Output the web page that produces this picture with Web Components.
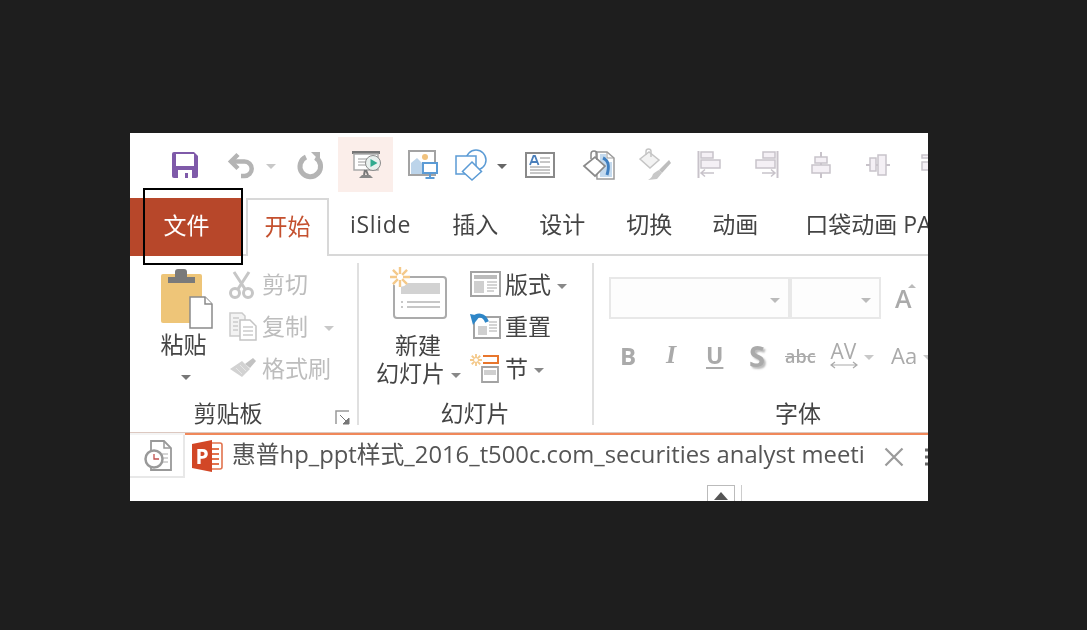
<!DOCTYPE html>
<html lang="zh"><head><meta charset="utf-8"><title>PowerPoint ribbon</title>
<style>
html,body{margin:0;height:100%;background:#1e1e1e}
body{display:flex;align-items:flex-start;padding:133px 0 0 130px;box-sizing:border-box;overflow:hidden;
font-family:"Open Sans","Noto Sans CJK SC",sans-serif;color:#444}
</style></head><body>
<app-window>
  <qat-bar></qat-bar>
  <tab-strip></tab-strip>
  <ribbon-body>
    <clip-group></clip-group>
    <slide-group></slide-group>
    <font-group></font-group>
  </ribbon-body>
  <doc-tab></doc-tab>
</app-window>
<script>
const G='#b4b4b4',L='#c8c3ca',LF='#f4f0f5',B='#5b9bd5',O='#f4c98a';
const sun=(cx,cy,r,c,w)=>{let s='';for(let i=0;i<8;i++){const a=i*Math.PI/4;s+=`M${cx+Math.cos(a)*r*.3} ${cy+Math.sin(a)*r*.3}L${cx+Math.cos(a)*r} ${cy+Math.sin(a)*r}`}return `<path d="${s}" stroke="${c}" stroke-width="${w}" fill="none"/>`};
const ICONS={
save:[26,26,`<path d="M2 0h20l4 4v20a2 2 0 0 1-2 2H2a2 2 0 0 1-2-2V2a2 2 0 0 1 2-2z" fill="#7f5aa9"/><rect x="4" y="2" width="18" height="12" fill="#fff"/><path d="M6 26v-8h14v8h-4v-5h-3v5z" fill="#fff"/>`],
undo:[28,26,`<path d="M10 2.500L3 9.500l7 7" fill="none" stroke="${G}" stroke-width="4.500"/><path d="M4 9.500h12.500a7.200 7.200 0 0 1 0 14.400H13" fill="none" stroke="${G}" stroke-width="4.500"/>`],
redo:[26,27,`<path d="M17.500 6.500A10.300 10.300 0 1 1 8 6" fill="none" stroke="${G}" stroke-width="5"/><path d="M13 1h9v9z" fill="${G}"/>`],
present:[32,30,`<path d="M2 2.500h28" stroke="#777" stroke-width="3"/><path d="M4 4h24v16H4z" fill="#fff" stroke="#aaa" stroke-width="1.500"/><path d="M8 9h10M8 12h8M8 15h8" stroke="#9a9a9a"/><circle cx="23" cy="13" r="7.500" fill="#e8f0ee" stroke="#8b8b8b"/><path d="M20.500 9l7 4-7 4z" fill="#2faa8f"/><path d="M15 20l-1 5M16 20l2 5" stroke="#777" stroke-width="2"/><path d="M12 25h8l3 3H9z" fill="#888"/>`],
picmon:[30,29,`<rect x="1" y="1" width="26" height="24" fill="#fff" stroke="#a3a3a3" stroke-width="2"/><circle cx="17" cy="7" r="3" fill="#f1c27d"/><path d="M3 24V13l6-5 6 6 1 10z" fill="#bcd4ea"/><rect x="15" y="13" width="14" height="10" fill="#fff" stroke="${B}" stroke-width="2"/><path d="M22 23v4M17.500 28h9" stroke="${B}" stroke-width="2"/>`],
shapes:[33,32,`<circle cx="21" cy="11" r="10" fill="#fff" stroke="${B}" stroke-width="1.500"/><rect x="1" y="7" width="20" height="18" fill="#fff" stroke="${B}" stroke-width="1.500"/><path d="M17 13l9.500 9.500L17 31l-9.500-8.500z" fill="#fff" stroke="${B}" stroke-width="1.500"/>`],
textbox:[30,26,`<rect x="1" y="1" width="28" height="24" fill="#fff" stroke="#8a8a8a" stroke-width="2"/><path d="M15 6h10M15 10h10M5 15h20M5 18h20M5 21h20" stroke="#8e8e8e"/><path d="M5 13l3.500-9h1.500l3.500 9M6.500 10h6" fill="none" stroke="#4a7fbb" stroke-width="1.800"/>`],
paint:[32,30,`<path d="M13 2h11l7 6v21H14z" fill="#fff" stroke="#9b9b9b" stroke-width="1.500"/><path d="M24 2v6h7" fill="none" stroke="#9b9b9b"/><path d="M17 4h6v8h6v15H17z" fill="#c4daee"/><path d="M20 8c7 3 6 10 4 17" stroke="#3f7fc0" stroke-width="3" fill="none"/><path d="M1 16L12 7l10 9-10 10z" fill="#fff" stroke="#8a8a8a" stroke-width="1.700"/><path d="M8 9V4a3 3 0 0 1 6 0v6" fill="none" stroke="#8a8a8a" stroke-width="1.500"/>`],
brushb:[32,32,`<path d="M1 10L10 3l10 8-9 8z" fill="#f3f3f3" stroke="#c5c5c5" stroke-width="1.500"/><path d="M7 6V2.500a2.500 2.500 0 0 1 5 0V8" fill="none" stroke="#c5c5c5" stroke-width="1.500"/><path d="M30 11L20 21l3 3L32 14z" fill="#bdbdbd"/><path d="M20 21l3 3-5 6-9 1c3-2 4-3 5-6 2-2 4-3 6-4z" fill="#c8c8c8"/>`],
alignl:[24,27,`<path d="M1.500 0v27" stroke="${L}" stroke-width="2"/><rect x="4" y="1" width="12" height="6" fill="${LF}" stroke="${L}" stroke-width="1.500"/><rect x="4" y="9" width="19" height="8" fill="${LF}" stroke="${L}" stroke-width="1.500"/><path d="M17 22H4m4-3.500L4 22l4 3.500" fill="none" stroke="${L}" stroke-width="1.500"/>`],
alignr:[24,27,`<path d="M22.500 0v27" stroke="${L}" stroke-width="2"/><rect x="8" y="1" width="12" height="6" fill="${LF}" stroke="${L}" stroke-width="1.500"/><rect x="1" y="9" width="19" height="8" fill="${LF}" stroke="${L}" stroke-width="1.500"/><path d="M7 22h13m-4-3.500l4 3.500-4 3.500" fill="none" stroke="${L}" stroke-width="1.500"/>`],
alignc:[20,26,`<path d="M10 0v26" stroke="${L}" stroke-width="2"/><rect x="4" y="5" width="12" height="6" fill="${LF}" stroke="${L}" stroke-width="1.500"/><rect x="1" y="13" width="18" height="8" fill="${LF}" stroke="${L}" stroke-width="1.500"/>`],
alignm:[24,22,`<path d="M0 11h24" stroke="${L}" stroke-width="2"/><rect x="4" y="4" width="6" height="13" fill="${LF}" stroke="${L}" stroke-width="1.500"/><rect x="12" y="1" width="8" height="20" fill="${LF}" stroke="${L}" stroke-width="1.500"/>`],
alignn:[12,22,`<rect x="1" y="1" width="12" height="3" fill="${LF}" stroke="${L}" stroke-width="1.500"/><rect x="1" y="8" width="12" height="8" fill="${LF}" stroke="${L}" stroke-width="1.500"/>`],
paste:[52,60,`<rect x="0" y="5" width="41" height="49" rx="2" fill="#eec578"/><path d="M7 14V8h7V3q0-3 3-3h6q3 0 3 3v5h8v6z" fill="#7a7a7a"/><path d="M29 28h15l7 7v24H29z" fill="#fff" stroke="#8a8a8a" stroke-width="1.500"/><path d="M44 28v7h7" fill="#fff" stroke="#8a8a8a" stroke-width="1.500"/>`],
cut:[25,29,`<g fill="none" stroke="#c6c6c6" stroke-width="3"><circle cx="6" cy="23" r="4.500"/><circle cx="19" cy="23" r="4.500"/><path d="M9 19L20 2M16 19L5 2"/></g>`],
copy:[28,29,`<path d="M1 1h12l3 3v20H1z" fill="#f3f3f3" stroke="#cbcbcb" stroke-width="1.500"/><path d="M11 8h10l6 6v14H11z" fill="#fff" stroke="#c4c4c4" stroke-width="1.500"/><path d="M4 6h6M4 10h5M4 14h5M4 18h5M14 15h10M14 19h10M14 23h10" stroke="#cbcbcb" stroke-width="1.300"/>`],
brush:[28,20,`<path d="M1 11L13 3l8 8-8 8z" fill="#d2d2d2"/><path d="M16 6l8-6 3 3-6 7z" fill="#c2c2c2"/><path d="M7 10l6 6M11 7l6 6" stroke="#e6e6e6"/>`],
launch:[16,16,`<path d="M1 14V1h13" fill="none" stroke="#999" stroke-width="1.500"/><path d="M5 5l8 8M14 8v6H8z" fill="#777" stroke="#777"/>`],
newslide:[58,52,`<rect x="4" y="10" width="52" height="41" rx="3" fill="#fff" stroke="#ababab" stroke-width="2"/><rect x="11" y="16" width="39" height="11" fill="#d2d2d2"/><path d="M11 35h2M11 40h2M17 35h33M17 40h33" stroke="#b5b5b5" stroke-width="1.300"/><circle cx="10" cy="10" r="10" fill="#fff"/>${sun(10,10,10,O,2.400)}`],
layout:[31,26,`<rect x="1" y="1" width="29" height="24" fill="#fff" stroke="#a3a3a3" stroke-width="2"/><rect x="4" y="4" width="23" height="4" fill="#bbb"/><rect x="4" y="10" width="10" height="12" fill="#cfcfcf"/><path d="M17 11h10M17 14h10M17 17h10M17 20h7" stroke="#aaa" stroke-width="1.200"/>`],
reset:[31,26,`<rect x="4" y="4" width="26" height="21" fill="#fff" stroke="#a3a3a3" stroke-width="2"/><rect x="8" y="13" width="9" height="9" fill="#cfcfcf"/><path d="M19 9h8M19 12h8M19 15h8M19 18h8" stroke="#aaa" stroke-width="1.200"/><path d="M3 6c4-5 11-5 14 3" fill="none" stroke="#2e86c7" stroke-width="4"/><path d="M0 1l10 2-7 9z" fill="#2e86c7"/>`],
section:[30,29,`<path d="M13 2h15v7H13" fill="none" stroke="#e8762d" stroke-width="2"/><path d="M12 13h16v15H12z" fill="#fff" stroke="#a3a3a3" stroke-width="1.800"/><rect x="14" y="16" width="12" height="5" fill="#cfcfcf"/>${sun(6,6,6,O,1.800)}`],
history:[28,31,`<path d="M7 1h13l7 7v22H7z" fill="#fff" stroke="#999" stroke-width="1.800"/><path d="M20 1v7h7" fill="none" stroke="#999" stroke-width="1.500"/><path d="M18 14h6M18 18h6M18 22h6" stroke="#aaa"/><circle cx="10" cy="19" r="8.500" fill="#fff" stroke="#999" stroke-width="2.500"/><path d="M10 14v5h5" fill="none" stroke="#c0504d" stroke-width="1.300"/>`],
ppt:[30,32,`<path d="M15 3h13q2 0 2 2v22q0 2-2 2H15z" fill="#fff" stroke="#e2734e" stroke-width="1.600"/><path d="M19 9h8M19 14h8M19 19h8M19 24h8" stroke="#e2734e" stroke-width="2"/><path d="M0 4L20 0v32L0 28z" fill="#d24726"/><text x="3.500" y="23.500" font-family="Open Sans" font-weight="700" font-size="21" fill="#fff">P</text>`],
close:[20,20,`<path d="M1.500 1.500l17 17M18.500 1.500l-17 17" stroke="#9a9a9a" stroke-width="2.200"/>`],
dots:[10,20,`<path d="M0 3h10M0 10h10M0 17h10" stroke="#666" stroke-width="3"/>`]
};
const def=(tag,css,html)=>customElements.define(tag,class extends HTMLElement{
  connectedCallback(){ if(this.shadowRoot)return; const r=this.attachShadow({mode:'open'}); r.innerHTML=`<style>${css}</style>`+(typeof html==='function'?html(this):html); }
});
def('x-ico',':host{display:block;flex:none;line-height:0}svg{display:block;overflow:visible}',el=>{
  const [w,h,s]=ICONS[el.getAttribute('name')];
  return `<svg width="${w}" height="${h}" viewBox="0 0 ${w} ${h}" aria-hidden="true">${s}</svg>`});
def('x-caret',':host{display:block;flex:none;line-height:0}',el=>{
  const c=el.getAttribute('c')||'#b0b0b0';
  return `<svg width="10" height="5" viewBox="0 0 10 5"><path d="M0 0h10L5 5z" fill="${c}"/></svg>`});
def('app-window',`:host{display:flex;flex-direction:column;width:798px;height:368px;background:#fff;overflow:hidden;position:relative;filter:blur(.45px);
 font:23px/1 "Open Sans","Noto Sans CJK SC",sans-serif;color:#444}
 .mark{position:absolute;left:13px;top:55px;width:96px;height:73px;border:2px solid #000}`,
 `<slot></slot><div class="mark"></div>`);
def('qat-bar',`:host{display:flex;align-items:center;height:65px;flex:none;padding:0 0 2px 42px;box-sizing:border-box;white-space:nowrap}
 .hl{width:55px;height:55px;background:#fbeeea;display:flex;align-items:center;justify-content:center;margin:0 0 0 14px;flex:none}`,
 `<x-ico name="save"></x-ico>
  <x-ico name="undo" style="margin-left:30px"></x-ico>
  <x-caret c="#c8c8c8" style="margin-left:10px"></x-caret>
  <x-ico name="redo" style="margin-left:22px"></x-ico>
  <div class="hl"><x-ico name="present"></x-ico></div>
  <x-ico name="picmon" style="margin-left:15px"></x-ico>
  <x-ico name="shapes" style="margin-left:17px"></x-ico>
  <x-caret c="#666" style="margin-left:9px"></x-caret>
  <x-ico name="textbox" style="margin-left:18px"></x-ico>
  <x-ico name="paint" style="margin-left:28px"></x-ico>
  <x-ico name="brushb" style="margin-left:24px"></x-ico>
  <x-ico name="alignl" style="margin-left:26px"></x-ico>
  <x-ico name="alignr" style="margin-left:34px"></x-ico>
  <x-ico name="alignc" style="margin-left:32px"></x-ico>
  <x-ico name="alignm" style="margin-left:35px"></x-ico>
  <x-ico name="alignn" style="margin-left:31px"></x-ico>`);
def('tab-strip',`:host{display:flex;height:58px;flex:none;border-bottom:2px solid #d8d8d8;box-sizing:border-box;white-space:nowrap;align-items:stretch}
 div{flex:none}
 .file{width:112px;background:#b7472a;color:#fff;display:flex;align-items:center;justify-content:center;padding:0 0 3px 1px;box-sizing:border-box;margin-bottom:-2px}
 .on{margin-left:4px;width:83px;box-sizing:border-box;border:2px solid #d8d8d8;border-bottom:0;background:#fff;color:#c4502e;display:flex;align-items:center;justify-content:center;margin-bottom:-2px;padding-bottom:3px}
 .t{display:flex;align-items:center;margin-left:41px;padding-bottom:3px}.t.first{margin-left:21px;letter-spacing:.7px}.t.last{margin-left:47px}`,
 `<div class="file">文件</div><div class="on">开始</div>
  <div class="t first">iSlide</div><div class="t">插入</div><div class="t">设计</div><div class="t">切换</div><div class="t" style="margin-left:40px">动画</div><div class="t last">口袋动画 PA</div>`);
def('ribbon-body',`:host{display:flex;height:176px;flex:none;white-space:nowrap}`,`<slot></slot>`);
const groupCss=`:host{display:flex;flex-direction:column;flex:none;box-sizing:border-box;margin-top:7px;height:162px;border-right:2px solid #e0e0e0;position:relative}
 .c{display:flex;flex:none;height:130px}.lab{flex:none;height:30px;margin-top:5px;display:flex;align-items:center;justify-content:center;color:#444;box-sizing:border-box}
 .dis{color:#bdbdbd}.r{display:flex;align-items:center;height:42px;flex:none}`;
def('clip-group',groupCss+`:host{width:229px}
 .paste{width:99px;display:flex;flex-direction:column;align-items:center;padding:6px 0 0 15px;box-sizing:border-box}
 .paste .txt{margin-top:4px;margin-left:-7px}.paste x-caret{margin:15px 0 0 -3px}
 .col{display:flex;flex-direction:column}
 .ic{width:33px;display:flex;align-items:center}
 .launch{position:absolute;left:205px;top:147px}`,
 `<div class="c"><div class="paste"><x-ico name="paste"></x-ico><div class="txt">粘贴</div><x-caret c="#777"></x-caret></div>
  <div class="col">
   <div class="r dis"><div class="ic"><x-ico name="cut"></x-ico></div>剪切</div>
   <div class="r dis"><div class="ic"><x-ico name="copy"></x-ico></div>复制<x-caret c="#c8c8c8" style="margin-left:16px"></x-caret></div>
   <div class="r dis"><div class="ic"><x-ico name="brush"></x-ico></div>格式刷</div>
  </div></div>
  <div class="lab" style="padding-right:31px">剪贴板</div><x-ico class="launch" name="launch"></x-ico>`);
def('slide-group',groupCss+`:host{width:235px}
 .n{width:111px;display:flex;flex-direction:column;align-items:center;padding:4px 0 0 8px;box-sizing:border-box}
 .n .a{margin:14px 0 0 -1px;height:24px;line-height:24px}.n .b{display:flex;align-items:center;margin-top:5px}
 .n .b x-caret{margin-left:6px}.col{display:flex;flex-direction:column}.ic{width:35px;display:flex;align-items:center}
 .r x-caret{margin-left:6px}`,
 `<div class="c"><div class="n"><x-ico name="newslide"></x-ico><div class="a">新建</div><div class="b">幻灯片<x-caret c="#888"></x-caret></div></div>
  <div class="col">
   <div class="r"><div class="ic"><x-ico name="layout"></x-ico></div>版式<x-caret c="#888"></x-caret></div>
   <div class="r"><div class="ic"><x-ico name="reset"></x-ico></div>重置</div>
   <div class="r"><div class="ic"><x-ico name="section"></x-ico></div>节<x-caret c="#888"></x-caret></div>
  </div></div><div class="lab" style="padding-right:1px">幻灯片</div>`);
def('font-group',groupCss+`:host{width:336px;border-right:0}
 .combo{display:flex;height:42px;margin:14px 0 0 15px;align-items:stretch}
 .box{border:2px solid #e8e8e8;background:#fdfdfd;box-sizing:border-box;display:flex;align-items:center;justify-content:flex-end;padding-right:8px}
 .A{margin-left:14px;align-self:center;color:#aaa;font-size:25px;font-weight:600;position:relative}
 .A x-caret{position:absolute;right:-5px;top:-3px;transform:rotate(180deg) scale(.8)}
 .f{display:flex;align-items:center;height:42px;margin:15px 0 0;color:#aaa;padding-left:26px}
 .f>*{flex:none}.bb{font:bold 24px "Open Sans",sans-serif;width:44px}.ii{font:italic bold 26px "Liberation Serif",serif;width:42px;padding-left:2px;box-sizing:border-box}
 .uu{font:bold 23px "Open Sans",sans-serif;width:43px;text-decoration:underline;text-underline-offset:3px}
 .ss{font:bold 29px "Open Sans",sans-serif;width:36px;text-shadow:2px 2px 2px #bbb}.abc{font-size:18px;font-weight:600;text-decoration:line-through;width:45px;color:#aaa;padding-top:2px}
 .av{display:flex;flex-direction:column;align-items:center;width:27px;font-size:21px;line-height:20px;margin-top:-1px}
 .aa{font-size:22px;margin-left:17px}.col{display:flex;flex-direction:column}`,
 `<div class="c"><div class="col">
   <div class="combo"><div class="box" style="width:181px"><x-caret c="#bbb"></x-caret></div><div class="box" style="width:91px"><x-caret c="#bbb"></x-caret></div><div class="A">A<x-caret c="#bbb"></x-caret></div></div>
   <div class="f"><div class="bb">B</div><div class="ii">I</div><div class="uu">U</div><div class="ss">S</div><div class="abc">abc</div>
    <div class="av">AV<svg width="28" height="8" viewBox="0 0 28 8"><path d="M1 4h26M5 1L1 4l4 3M23 1l4 3-4 3" fill="none" stroke="#aaa" stroke-width="1.200"/></svg></div>
    <x-caret c="#c8c8c8" style="margin-left:7px"></x-caret><div class="aa">Aa</div><x-caret c="#c8c8c8" style="margin-left:6px"></x-caret></div>
  </div></div><div class="lab" style="justify-content:flex-start;margin-left:181px">字体</div>`);
def('doc-tab',`:host{display:block;flex:1;border-top:3px solid #f0885a;position:relative;white-space:nowrap}
 .line{position:absolute;left:0;right:0;top:-3px;height:1px;background:#dcc8c0}
 .cover{position:absolute;left:0;top:-2px;width:55px;height:2px;background:#f4f4f4}
 .row{display:flex;align-items:center;height:43px}
 .h{width:55px;height:43px;box-sizing:border-box;border:solid #e8e8e8;border-width:0 2px 2px 0;display:flex;align-items:center;justify-content:center;margin-right:7px;flex:none;padding-left:3px}
 .name{margin-left:10px;font-size:23.8px;color:#555;width:634px;flex:none;padding-bottom:3px;box-sizing:border-box}
 .up{position:absolute;left:577px;top:50px;width:28px;height:24px;border:1px solid #bbb;box-sizing:border-box;display:flex;justify-content:center;padding-top:6px}
 .v{position:absolute;left:611px;top:50px;width:1px;height:20px;background:#ccc}`,
 `<div class="line"></div><div class="cover"></div><div class="row"><div class="h"><x-ico name="history"></x-ico></div><x-ico name="ppt" style="margin-top:-2px"></x-ico>
  <div class="name">惠普hp_ppt样式_2016_t500c.com_securities analyst meeti</div>
  <x-ico name="close" style="margin-left:18px"></x-ico><x-ico name="dots" style="margin-left:21px"></x-ico></div>
  <div class="up"><svg width="14" height="8" viewBox="0 0 14 8"><path d="M0 8L7 0l7 8z" fill="#555"/></svg></div><div class="v"></div>`);
</script>
</body></html>
